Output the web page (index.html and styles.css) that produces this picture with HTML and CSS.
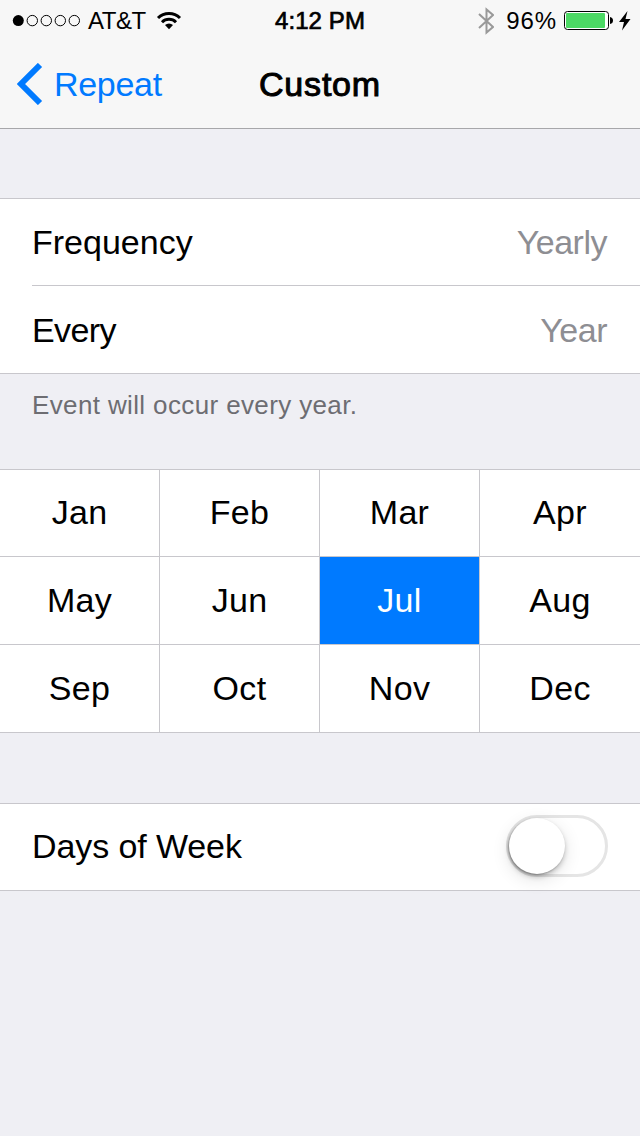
FILE: index.html
```
<!DOCTYPE html>
<html lang="en">
<head>
    <meta charset="UTF-8">
    <meta name="viewport" content="width=device-width, initial-scale=1.0">
    <title>Custom</title>
    <link rel="stylesheet" href="styles.css">
</head>
<body>
    <header>
        <div class="status">
            <div class="status-left">
                <svg class="signal" width="70" height="14" viewBox="0 0 70 14">
                    <circle cx="6.300" cy="6.600" r="5.500"/>
                    <g fill="none" stroke="#000" stroke-width="1">
                        <circle cx="20.300" cy="6.600" r="5.200"/>
                        <circle cx="34.300" cy="6.600" r="5.200"/>
                        <circle cx="48.300" cy="6.600" r="5.200"/>
                        <circle cx="62.300" cy="6.600" r="5.200"/>
                    </g>
                </svg>
                <span class="carrier">AT&amp;T</span>
                <svg class="wifi" width="26" height="20" viewBox="0 0 26 20">
                    <g fill="none" stroke="#000" stroke-width="3">
                        <path d="M2 7a15.500 15.500 0 0 1 22 0"/>
                        <path d="M6 11.200a10 10 0 0 1 14 0"/>
                    </g>
                    <path d="M9 14.100a6 6 0 0 1 8 0L13 18.300z"/>
                </svg>
            </div>
            <span class="time">4:12 PM</span>
            <div class="status-right">
                <svg class="bluetooth" width="16" height="28" viewBox="0 0 16 28">
                    <path d="M1 7l14 13-6.500 5.500v-23l6.500 5.500-14 13" fill="none" stroke="#999" stroke-width="2"/>
                </svg>
                <span class="percent">96%</span>
                <svg class="battery" width="50" height="20" viewBox="0 0 50 20">
                    <rect x=".500" y=".500" width="44" height="18" rx="3" fill="#fff" stroke="#000"/>
                    <rect x="2" y="2" width="39" height="15" rx="1" fill="#4cd964"/>
                    <path d="M46 6q3 .500 3 3.500t-3 3.500z"/>
                </svg>
                <svg class="bolt" width="12" height="20" viewBox="0 0 12 20">
                    <path d="M8.500 0L0 11h5L3 19.500 11.500 8H6.500z"/>
                </svg>
            </div>
        </div>
        <nav class="navbar">
            <a href="#" class="back">
                <svg width="26" height="42" viewBox="0 0 26 42">
                    <path d="M23 2L4 21l19 19" fill="none" stroke="#007aff" stroke-width="6"/>
                </svg>
                <span>Repeat</span>
            </a>
            <h1>Custom</h1>
        </nav>
    </header>

    <div class="group">
        <div class="row">
            <span>Frequency</span>
            <span class="value">Yearly</span>
        </div>
        <div class="row row-last">
            <span class="every">Every</span>
            <span class="value">Year</span>
        </div>
    </div>
    <p class="note">Event will occur every year.</p>

    <div class="months">
        <div class="month">Jan</div>
        <div class="month">Feb</div>
        <div class="month">Mar</div>
        <div class="month">Apr</div>
        <div class="month">May</div>
        <div class="month">Jun</div>
        <div class="month selected">Jul</div>
        <div class="month">Aug</div>
        <div class="month">Sep</div>
        <div class="month">Oct</div>
        <div class="month">Nov</div>
        <div class="month">Dec</div>
    </div>

    <div class="group days">
        <span class="days-label">Days of Week</span>
        <div class="switch"><div class="knob"></div></div>
    </div>
</body>
</html>
```
FILE: styles.css
```
*{
    margin: 0;
    padding: 0;
    box-sizing: border-box;
}
body{
    font-family: "Liberation Sans", Arial, sans-serif;
    font-size: 34px;
    background-color: #efeff4;
    color: #000;
    min-height: 1136px;
}
svg{
    display: block;
}
header{
    height: 129px;
    background-color: #f7f7f7;
    border-bottom: 1px solid #a7a7aa;
}
.status{
    height: 40px;
    padding-top: 2px;
    display: grid;
    grid-template-columns: 1fr auto 1fr;
    align-items: center;
    font-size: 24px;
}
.status-left{
    display: flex;
    align-items: center;
    padding-left: 12px;
}
.carrier{
    margin-left: 6px;
    letter-spacing: -0.5px;
}
.wifi{
    margin-left: 10px;
}
.time{
    letter-spacing: 0.1px;
    -webkit-text-stroke: 0.7px #000;
}
.status-right{
    display: flex;
    align-items: center;
    justify-content: flex-end;
    padding-right: 9px;
}
.percent{
    margin: 0 7px 0 12px;
    letter-spacing: 0.9px;
}
.bolt{
    margin-left: 5px;
}
.bluetooth{
    margin-bottom: 1px;
}
.navbar{
    height: 88px;
    display: grid;
    grid-template-columns: 1fr auto 1fr;
    align-items: center;
}
.back{
    display: flex;
    align-items: center;
    gap: 11px;
    padding-left: 17px;
    color: #007aff;
    text-decoration: none;
    letter-spacing: -0.3px;
}
h1{
    font-size: 34px;
    font-weight: 400;
    letter-spacing: 0.8px;
    -webkit-text-stroke: 1px #000;
}
.group{
    background-color: #fff;
    border-top: 1px solid #c8c7cc;
    border-bottom: 1px solid #c8c7cc;
    margin-top: 69px;
    padding-left: 32px;
}
.row{
    height: 87px;
    display: flex;
    align-items: center;
    justify-content: space-between;
    padding-right: 33px;
    border-bottom: 1px solid #c8c7cc;
}
.row-last{
    padding-top: 2px;
    border-bottom: none;
}
.every{
    letter-spacing: -0.6px;
}
.value{
    color: #8e8e93;
    letter-spacing: -0.5px;
}
.note{
    height: 95px;
    padding: 16px 32px 0;
    font-size: 26px;
    line-height: 30px;
    letter-spacing: 0.37px;
    color: #6d6d72;
}
.months{
    display: grid;
    grid-template-columns: repeat(4, 160px);
    grid-template-rows: 87px 88px 88px;
    border-top: 1px solid #c8c7cc;
    background-color: #fff;
}
.month{
    display: flex;
    align-items: center;
    justify-content: center;
    border-right: 1px solid #c8c7cc;
    border-bottom: 1px solid #c8c7cc;
    letter-spacing: 0.3px;
}
.month:nth-child(4n){
    border-right: none;
}
.month:nth-child(-n+4){
    padding-bottom: 1px;
}
.selected{
    background-color: #007aff;
    color: #fff;
}
.days{
    height: 88px;
    margin-top: 70px;
    padding-right: 32px;
    padding-bottom: 2px;
    display: flex;
    align-items: center;
    justify-content: space-between;
}
.days-label{
    letter-spacing: -0.1px;
}
.switch{
    width: 102px;
    height: 62px;
    border: 3px solid #e5e5e5;
    border-radius: 31px;
}
.knob{
    width: 56px;
    height: 56px;
    border-radius: 50%;
    background-color: #fff;
    box-shadow: -1px 1px 2px rgba(0,0,0,0.3), 0 3px 5px rgba(0,0,0,0.2), 0 5px 18px rgba(0,0,0,0.12);
}
```
